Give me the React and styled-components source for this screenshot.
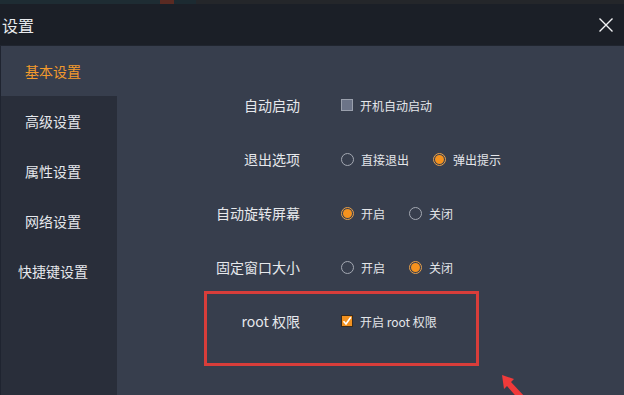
import React from "react";
import styled, { createGlobalStyle } from "styled-components";

const Global = createGlobalStyle`
  html, body { margin: 0; padding: 0; background: #1b1f27; }
  body { width: 624px; height: 395px; overflow: hidden; font-family: "Noto Sans CJK SC", "Noto Sans", sans-serif; }
  * { box-sizing: border-box; }
`;

const Window = styled.div`
  width: 624px;
  height: 395px;
  display: flex;
  flex-direction: column;
  position: relative;
  overflow: hidden;
`;

const TopStrip = styled.div`
  height: 4px;
  display: flex;
  flex: none;
`;

const StripPart = styled.div`
  width: ${(p) => p.$w}px;
  background: ${(p) => p.$c};
`;

const TitleBar = styled.div`
  height: 42px;
  flex: none;
  background: #1b1f27;
  display: flex;
  align-items: center;
  justify-content: space-between;
  padding: 0 10px 0 2px;
  border-bottom: 1px solid #20252f;
`;

const Title = styled.div`
  color: #e8eaee;
  font-size: 16px;
  line-height: 1;
`;

const Close = styled.svg`
  width: 16px;
  height: 16px;
  display: block;
`;

const Body = styled.div`
  flex: 1;
  display: flex;
  background: #373e4d;
  border-left: 1px solid #1f2430;
`;

const Sidebar = styled.nav`
  width: 116px;
  flex: none;
  display: flex;
  flex-direction: column;
  background: #292e3a;
`;

const NavItem = styled.div`
  height: 50px;
  width: 116px;
  padding-right: 12px;
  display: flex;
  align-items: center;
  justify-content: center;
  font-size: 14px;
  color: ${(p) => (p.$active ? "#f39a2c" : "#e6e8ec")};
  background: ${(p) => (p.$active ? "#373e4d" : "transparent")};
`;

const Content = styled.div`
  flex: 1;
  padding-top: 32px;
  display: flex;
  flex-direction: column;
`;

const Row = styled.div`
  height: 54px;
  display: grid;
  grid-template-columns: 184px auto;
  column-gap: 40px;
  align-items: center;
  position: relative;
  ${(p) =>
    p.$highlight &&
    `
    &::after {
      content: "";
      position: absolute;
      left: 87px;
      top: -3px;
      width: 269px;
      height: 69px;
      border: 3px solid #d83d3a;
    }
  `}
`;

const Label = styled.div`
  text-align: right;
  font-size: 14px;
  color: #e6e8ec;
  padding-right: 1px;
`;

const Controls = styled.div`
  display: flex;
  align-items: center;
  gap: 24px;
`;

const Option = styled.div`
  display: flex;
  align-items: center;
  gap: 7px;
  font-size: 12px;
  color: #e4e6ea;
`;

const Radio = styled.span`
  width: 13px;
  height: 13px;
  border-radius: 50%;
  border: 1px solid ${(p) => (p.$on ? "#e9a04a" : "#a4a9b3")};
  display: flex;
  align-items: center;
  justify-content: center;
  &::after {
    content: "";
    width: 9px;
    height: 9px;
    border-radius: 50%;
    background: ${(p) => (p.$on ? "#f5921e" : "transparent")};
  }
`;

const Box = styled.span`
  width: 12px;
  height: 12px;
  border: 1px solid ${(p) => (p.$on ? "#3a2b1c" : "#9aa0ad")};
  background: ${(p) => (p.$on ? "#f2911f" : "#6c7488")};
  display: flex;
  align-items: center;
  justify-content: center;
`;

const Check = styled.svg`
  width: 10px;
  height: 10px;
  display: block;
`;

const Arrow = styled.svg`
  position: absolute;
  left: 496px;
  top: 370px;
  width: 40px;
  height: 30px;
`;

const CheckBox = ({ on }) => (
  <Box $on={on}>
    {on && (
      <Check viewBox="0 0 10 10">
        <path d="M1.5 5.2 L4 8 L8.8 1.2" fill="none" stroke="#fff" strokeWidth="1.6" />
      </Check>
    )}
  </Box>
);

const nav = ["基本设置", "高级设置", "属性设置", "网络设置", "快捷键设置"];

export default function App() {
  return (
    <Window>
      <Global />
      <TopStrip>
        <StripPart $w={160} $c="#1e2c33" />
        <StripPart $w={14} $c="#5a2a22" />
        <StripPart $w={22} $c="#1c2a31" />
        <StripPart $w={428} $c="#24262a" />
      </TopStrip>
      <TitleBar>
        <Title>设置</Title>
        <Close viewBox="0 0 16 16">
          <path d="M1.5 1.5 L14.5 14.5 M14.5 1.5 L1.5 14.5" stroke="#f2f3f5" strokeWidth="1.4" />
        </Close>
      </TitleBar>
      <Body>
        <Sidebar>
          {nav.map((n, i) => (
            <NavItem key={n} $active={i === 0}>
              {n}
            </NavItem>
          ))}
        </Sidebar>
        <Content>
          <Row>
            <Label>自动启动</Label>
            <Controls>
              <Option>
                <CheckBox on={false} />
                开机自动启动
              </Option>
            </Controls>
          </Row>
          <Row>
            <Label>退出选项</Label>
            <Controls>
              <Option>
                <Radio />
                直接退出
              </Option>
              <Option>
                <Radio $on />
                弹出提示
              </Option>
            </Controls>
          </Row>
          <Row>
            <Label>自动旋转屏幕</Label>
            <Controls>
              <Option>
                <Radio $on />
                开启
              </Option>
              <Option>
                <Radio />
                关闭
              </Option>
            </Controls>
          </Row>
          <Row>
            <Label>固定窗口大小</Label>
            <Controls>
              <Option>
                <Radio />
                开启
              </Option>
              <Option>
                <Radio $on />
                关闭
              </Option>
            </Controls>
          </Row>
          <Row $highlight>
            <Label>root 权限</Label>
            <Controls>
              <Option>
                <CheckBox on />
                开启 root 权限
              </Option>
            </Controls>
          </Row>
        </Content>
      </Body>
      <Arrow viewBox="0 0 40 30">
        <path d="M6 5 L18 9 L15 12 L30 28 L25 32 L11 16 L8 19 Z" fill="#f03a3a" />
      </Arrow>
    </Window>
  );
}
